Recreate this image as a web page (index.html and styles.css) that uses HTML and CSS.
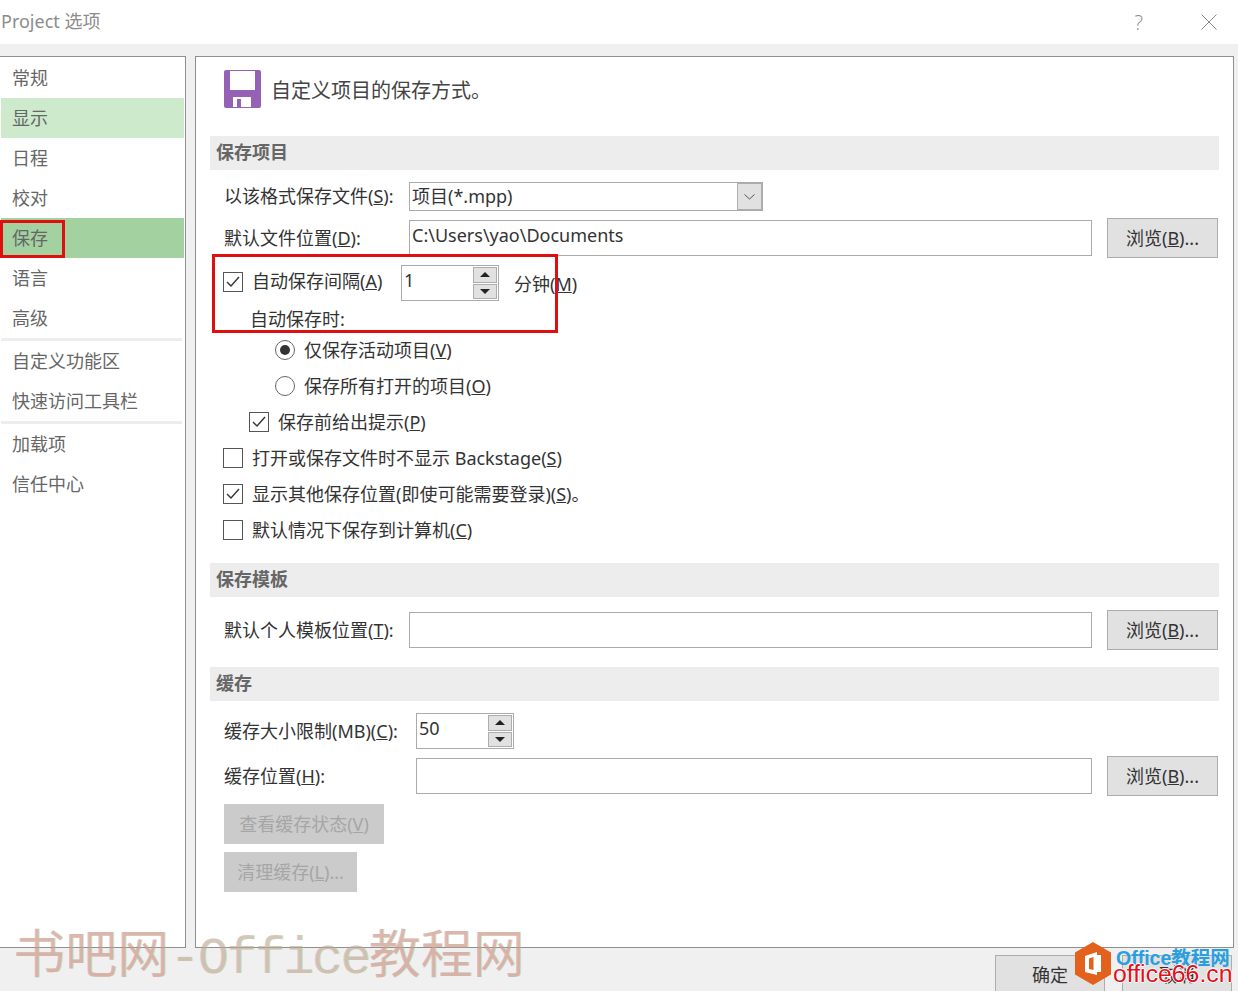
FILE: index.html
```html
<!DOCTYPE html>
<html lang="zh-CN">
<head>
<meta charset="utf-8">
<title>Project 选项</title>
<link rel="stylesheet" href="styles.css">
</head>
<body>
<div class="dialog">
  <header class="titlebar">
    <div class="title">Project 选项</div>
    <div class="help">?</div>
    <svg class="close" width="16" height="16" viewBox="0 0 16 16"><path d="M0.5 0.5L15.5 15.5M15.5 0.5L0.5 15.5" stroke="#8a8a8a" stroke-width="1" fill="none"/></svg>
  </header>
  <main class="main">
    <nav class="nav">
      <div class="nav-item">常规</div>
      <div class="nav-item hover">显示</div>
      <div class="nav-item">日程</div>
      <div class="nav-item">校对</div>
      <div class="nav-item active">保存</div>
      <div class="nav-item">语言</div>
      <div class="nav-item">高级</div>
      <div class="nav-sep"></div>
      <div class="nav-item">自定义功能区</div>
      <div class="nav-item">快速访问工具栏</div>
      <div class="nav-sep"></div>
      <div class="nav-item">加载项</div>
      <div class="nav-item">信任中心</div>
    </nav>
    <section class="panel">
      <div class="intro">
        <svg class="floppy" width="37" height="38" viewBox="0 0 37 38"><rect width="37" height="38" rx="2" fill="#9561b4"/><rect x="6" y="1" width="25" height="19" fill="#fff"/><rect x="9" y="27" width="18" height="10" fill="#fff"/><rect x="13" y="29" width="4" height="9" fill="#9561b4"/></svg>
        <div class="intro-text">自定义项目的保存方式。</div>
      </div>
      <h2 class="section">保存项目</h2>
      <div class="row r-select">
        <label class="lbl w185">以该格式保存文件(<u>S</u>):</label>
        <div class="select"><span class="select-val">项目(*.mpp)</span><span class="select-btn"><svg width="11" height="6" viewBox="0 0 11 6"><path d="M0.5 0.5L5.5 5L10.5 0.5" stroke="#555" fill="none"/></svg></span></div>
      </div>
      <div class="row r-field">
        <label class="lbl w185">默认文件位置(<u>D</u>):</label>
        <div class="field path">C:\Users\yao\Documents</div>
        <button class="btn">浏览(<u>B</u>)...</button>
      </div>
      <div class="row r-auto">
        <span class="cb on"><svg width="14" height="12" viewBox="0 0 14 12"><path d="M1 6L5 10L13 1" stroke="#333" stroke-width="1.4" fill="none"/></svg></span>
        <label class="lbl w149">自动保存间隔(<u>A</u>)</label>
        <div class="spin"><span class="spin-val">1</span><span class="spin-btns"><span class="spin-b"><i class="up"></i></span><span class="spin-b"><i class="down"></i></span></span></div>
        <label class="lbl unit">分钟(<u>M</u>)</label>
      </div>
      <div class="row r-when"><label class="lbl">自动保存时:</label></div>
      <div class="row opt in2"><span class="radio on"></span><label class="lbl">仅保存活动项目(<u>V</u>)</label></div>
      <div class="row opt in2"><span class="radio"></span><label class="lbl">保存所有打开的项目(<u>O</u>)</label></div>
      <div class="row opt in1"><span class="cb on"><svg width="14" height="12" viewBox="0 0 14 12"><path d="M1 6L5 10L13 1" stroke="#333" stroke-width="1.4" fill="none"/></svg></span><label class="lbl">保存前给出提示(<u>P</u>)</label></div>
      <div class="row opt in0"><span class="cb"></span><label class="lbl">打开或保存文件时不显示 Backstage(<u>S</u>)</label></div>
      <div class="row opt in0"><span class="cb on"><svg width="14" height="12" viewBox="0 0 14 12"><path d="M1 6L5 10L13 1" stroke="#333" stroke-width="1.4" fill="none"/></svg></span><label class="lbl">显示其他保存位置(即使可能需要登录)(<u>S</u>)。</label></div>
      <div class="row opt in0"><span class="cb"></span><label class="lbl">默认情况下保存到计算机(<u>C</u>)</label></div>
      <h2 class="section s2">保存模板</h2>
      <div class="row r-tpl">
        <label class="lbl w185">默认个人模板位置(<u>T</u>):</label>
        <div class="field"></div>
        <button class="btn">浏览(<u>B</u>)...</button>
      </div>
      <h2 class="section s3">缓存</h2>
      <div class="row r-cache">
        <label class="lbl w192">缓存大小限制(MB)(<u>C</u>):</label>
        <div class="spin"><span class="spin-val">50</span><span class="spin-btns"><span class="spin-b"><i class="up"></i></span><span class="spin-b"><i class="down"></i></span></span></div>
      </div>
      <div class="row r-field">
        <label class="lbl w192">缓存位置(<u>H</u>):</label>
        <div class="field"></div>
        <button class="btn">浏览(<u>B</u>)...</button>
      </div>
      <button class="btn off wide">查看缓存状态(<u>V</u>)</button>
      <button class="btn off narrow">清理缓存(<u>L</u>)...</button>
    </section>
  </main>
  <footer class="footer">
    <button class="btn fbtn">确定</button>
    <button class="btn fbtn cancel">取消</button>
  </footer>
</div>
<div class="mark-nav"></div>
<div class="mark-auto"></div>
<div class="watermark"><span>书吧网</span><span class="wm-latin">-Office</span><span>教程网</span></div>
<svg class="logo" width="38" height="44" viewBox="0 0 38 44"><path d="M19 0L37 10.5V32.5L19 43L1 32.5V10.5Z" fill="#e2611c"/><path d="M11 14L23 10V33L11 30ZM23 13H27V30H23" fill="#fff"/><path d="M15 16.5L19.5 15V28L15 27Z" fill="#e2611c"/></svg>
<div class="brand brand-a">Office教程网</div>
<div class="brand brand-b">office66.cn</div>
</body>
</html>
```
FILE: styles.css
```css
* { box-sizing: border-box; }
html, body { margin: 0; padding: 0; }
body {
  width: 1238px;
  height: 991px;
  overflow: hidden;
  position: relative;
  background: #f0f0f0;
  color: #333;
  font-family: "Noto Sans", "Noto Sans CJK SC", sans-serif;
  font-size: 18px;
}
.dialog { display: flex; flex-direction: column; height: 991px; }

.titlebar {
  height: 44px;
  flex: none;
  background: #fff;
  display: flex;
  align-items: center;
  padding-left: 1px;
}
.title { font-size: 18px; color: #8c8c8c; flex: 1; margin-bottom: 4px; }
.help { font-size: 20px; color: #8c8c8c; margin-right: 58px; font-family: "Open Sans", sans-serif; font-weight: 300; }
.close { margin-right: 21px; }

.main { flex: none; display: flex; height: 904px; padding: 12px 4px 0 0; gap: 9px; }
.nav {
  width: 186px;
  flex: none;
  background: #fff;
  border: 1px solid #8f8f8f;
  border-width: 1px 1px 1px 0;
  padding: 1px 1px 0 1px;
}
.nav-item { height: 40px; padding-left: 11px; line-height: 40px; color: #666; }
.nav-item.hover { background: #cdeacd; }
.nav-item.active { background: #a3d2a0; }
.nav-sep { height: 3px; background: #ededed; margin-right: 2px; }

.panel {
  flex: 1;
  background: #fff;
  border: 1px solid #8f8f8f;
  padding: 0 14px;
  display: flex;
  flex-direction: column;
  align-items: stretch;
}
.intro { height: 79px; flex: none; display: flex; align-items: flex-start; padding: 13px 0 0 14px; gap: 10px; }
.floppy { flex: none; }
.intro-text { font-size: 20px; line-height: 40px; color: #444; margin-top: 1px; }

.section {
  margin: 0;
  height: 34px;
  flex: none;
  background: #ededed;
  font-size: 18px;
  font-weight: 700;
  line-height: 32px;
  padding-left: 6px;
  color: #666;
}
.s2 { margin-top: 15px; }
.s3 { margin-top: 17px; }

.row { display: flex; align-items: center; flex: none; padding-left: 14px; padding-right: 1px; }
.lbl { white-space: nowrap; color: #333; margin-bottom: 2px; }
.w185 { width: 185px; flex: none; }
.w192 { width: 192px; flex: none; }
.w149 { width: 149px; flex: none; }
.r-auto .unit { margin: 0 0 0 15px; }

.r-select { height: 29px; margin-top: 12px; }
.r-select .lbl { margin-bottom: 4px; }
.r-field { height: 40px; margin-top: 7px; }
.r-auto { height: 36px; margin-top: 7px; padding-left: 13px; }
.r-auto .w149 { margin-bottom: 6px; }
.r-auto .cb { margin: 0 9px 3px 0; }
.r-when { height: 31px; padding: 5px 0 0 40px; }
.opt { height: 36px; }
.in2 { padding-left: 65px; }
.in1 { padding-left: 39px; }
.in0 { padding-left: 13px; }
.r-tpl { height: 40px; margin-top: 13px; }
.r-cache { height: 36px; margin-top: 12px; }

.select {
  width: 354px;
  height: 29px;
  border: 1px solid #ababab;
  display: flex;
  align-items: center;
  justify-content: space-between;
  padding-left: 2px;
}
.select-val { color: #333; margin-bottom: 4px; }
.select-btn {
  width: 25px;
  height: 27px;
  background: #e1e1e1;
  border: 1px solid #adadad;
  display: flex;
  align-items: center;
  justify-content: center;
}
.field {
  flex: 1;
  height: 36px;
  border: 1px solid #ababab;
  padding-left: 2px;
  line-height: 28px;
  color: #333;
}
.btn {
  font-family: inherit;
  font-size: 18px;
  color: #333;
  width: 111px;
  height: 40px;
  flex: none;
  padding: 0 0 2px;
  background: #e1e1e1;
  border: 1px solid #adadad;
  white-space: nowrap;
}
.field + .btn { margin-left: 15px; }
.off { background: #cbcbcb; border-color: #cbcbcb; color: #a6a6a6; margin: 8px 0 0 14px; align-self: flex-start; }
.wide { width: 160px; }
.narrow { width: 133px; }

.cb {
  width: 20px;
  height: 20px;
  flex: none;
  border: 1px solid #555;
  background: #fff;
  margin-right: 9px;
  display: flex;
  align-items: center;
  justify-content: center;
}
.radio {
  width: 20px;
  height: 20px;
  flex: none;
  border: 1px solid #666;
  border-radius: 50%;
  background: #fff;
  margin-right: 9px;
  display: flex;
  align-items: center;
  justify-content: center;
}
.radio.on::after { content: ""; width: 10px; height: 10px; border-radius: 50%; background: #333; }

.spin {
  width: 98px;
  height: 36px;
  flex: none;
  border: 1px solid #ababab;
  display: flex;
  justify-content: space-between;
  padding: 1px 1px 1px 2px;
}
.spin-val { line-height: 26px; color: #333; }
.spin-btns { width: 24px; display: flex; flex-direction: column; gap: 1px; }
.spin-b {
  flex: 1;
  background: #e1e1e1;
  border: 1px solid #adadad;
  display: flex;
  align-items: center;
  justify-content: center;
}
.up { width: 0; height: 0; border: 5px solid transparent; border-top: 0; border-bottom: 5px solid #222; }
.down { width: 0; height: 0; border: 5px solid transparent; border-bottom: 0; border-top: 5px solid #222; }

.footer { flex: 1; display: flex; justify-content: flex-end; gap: 17px; padding: 7px 6px 0 0; }
.fbtn { width: 110px; height: 48px; color: #333; line-height: 26px; padding-bottom: 8px; }
.footer .cancel { width: 110px; }

.mark-nav { position: absolute; left: 0; top: 220px; width: 65px; height: 38px; border: 3px solid #e00f0f; }
.mark-auto { position: absolute; left: 212px; top: 254px; width: 346px; height: 79px; border: 3px solid #e00f0f; }

.watermark {
  position: absolute;
  left: 13px;
  top: 912px;
  font-family: "Noto Sans CJK SC", serif;
  font-size: 52px;
  font-weight: 400;
  line-height: 78px;
  white-space: nowrap;
  color: rgba(236, 130, 125, 0.5);
  text-shadow: 1px 0 rgba(130, 215, 170, 0.45);
}
.wm-latin { font-family: "Liberation Mono", monospace; letter-spacing: -2.7px; color: rgba(236, 130, 125, 0.36); }

.logo { position: absolute; left: 1074px; top: 942px; }
.brand { position: absolute; white-space: nowrap; font-family: "Liberation Sans", "Noto Sans CJK SC", sans-serif; font-weight: 700; }
.brand-a { left: 1116px; top: 945px; font-size: 19.5px; line-height: 26px; color: #2a9fe0; }
.brand-b {
  left: 1113px;
  top: 959px;
  font-size: 24.8px;
  line-height: 30px;
  font-weight: 400;
  color: #e3101a;
  text-shadow: 1px 0 #fff, -1px 0 #fff, 0 1px #fff, 0 -1px #fff;
}
```
